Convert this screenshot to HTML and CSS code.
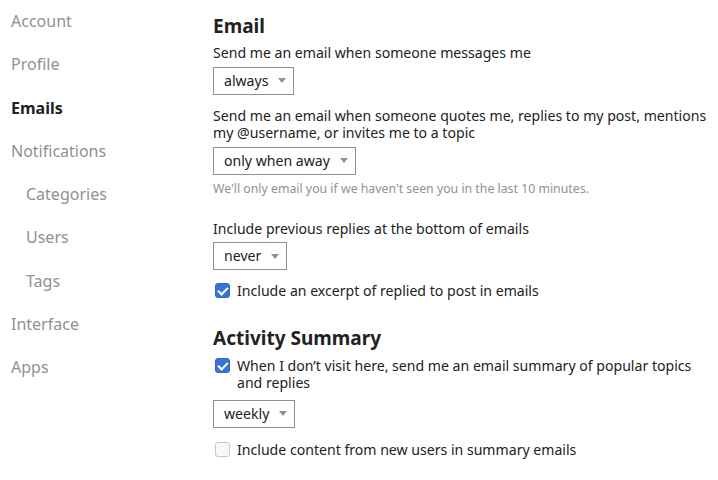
FILE: index.html
```html
<!DOCTYPE html>
<html lang="en">
<head>
    <meta charset="UTF-8">
    <title>Preferences - Emails</title>
    <link rel="stylesheet" href="styles.css">
</head>
<body>
    <div class="page">
        <!-- Sidebar -->
        <nav class="side-nav">
            <ul>
                <li><a href="#">Account</a></li>
                <li><a href="#">Profile</a></li>
                <li class="active"><a href="#">Emails</a></li>
                <li><a href="#">Notifications</a></li>
                <li class="sub"><a href="#">Categories</a></li>
                <li class="sub"><a href="#">Users</a></li>
                <li class="sub"><a href="#">Tags</a></li>
                <li><a href="#">Interface</a></li>
                <li><a href="#">Apps</a></li>
            </ul>
        </nav>

        <!-- Main Content -->
        <main class="prefs">
            <section class="pref-section">
                <h2>Email</h2>

                <div class="control">
                    <label>Send me an email when someone messages me</label>
                    <div class="select">always</div>
                </div>

                <div class="control">
                    <label>Send me an email when someone quotes me, replies to my post, mentions my @username, or invites me to a topic</label>
                    <div class="select">only when away</div>
                    <p class="hint">We'll only email you if we haven't seen you in the last 10 minutes.</p>
                </div>

                <div class="control">
                    <label>Include previous replies at the bottom of emails</label>
                    <div class="select">never</div>
                </div>

                <label class="check"><span class="box checked"></span><span>Include an excerpt of replied to post in emails</span></label>
            </section>

            <section class="pref-section">
                <h2>Activity Summary</h2>

                <label class="check"><span class="box checked"></span><span>When I don’t visit here, send me an email summary of popular topics and replies</span></label>
                <div class="control digest">
                    <div class="select">weekly</div>
                </div>

                <label class="check"><span class="box"></span><span>Include content from new users in summary emails</span></label>
            </section>
        </main>
    </div>
</body>
</html>
```

FILE: styles.css
```css
/* General Styles */
body {
    font-family: 'Noto Sans', sans-serif;
    margin: 0;
    background-color: #fff;
    color: #222;
}

.page {
    display: flex;
}

/* Sidebar */
.side-nav {
    width: 213px;
    flex-shrink: 0;
}

.side-nav ul {
    list-style: none;
    margin: 0;
    padding: 8px 0 0 11px;
}

.side-nav li {
    height: 43.3px;
    font-size: 16px;
    line-height: 26px;
}

.side-nav li a {
    text-decoration: none;
    color: #919191;
}

.side-nav li.sub {
    padding-left: 15px;
}

.side-nav li.active a {
    color: #222;
    font-weight: bold;
}

/* Preferences */
.prefs {
    flex: 1;
    padding-right: 8px;
    font-size: 14.1px;
}

.pref-section h2 {
    font-size: 19px;
    margin: 13px 0 5px;
    line-height: 26px;
}

.pref-section + .pref-section h2 {
    margin: 25px 0 6px;
}

.control {
    margin-bottom: 12px;
}

.control.digest {
    margin: 8px 0 13px;
}

.control label {
    display: block;
    line-height: 17.5px;
    margin-bottom: 5px;
}

.select {
    display: inline-flex;
    align-items: center;
    height: 26px;
    padding: 0 7px 0 10px;
    border: 1px solid #919191;
    line-height: 26px;
}

.select::after {
    content: '';
    margin-left: 10px;
    border-left: 4.5px solid transparent;
    border-right: 4.5px solid transparent;
    border-top: 5px solid #919191;
}

.hint {
    margin: 5px 0 23px;
    font-size: 12.3px;
    color: #919191;
}

.check {
    display: flex;
    align-items: flex-start;
    gap: 7px;
    line-height: 17.5px;
    margin-bottom: 7px;
    padding-left: 2px;
}

.box {
    width: 13px;
    height: 13px;
    margin-top: 1px;
    flex-shrink: 0;
    border: 1px solid #c8c8c8;
    border-radius: 3px;
    background-color: #f8f8f8;
}

.box.checked {
    background-color: #3874d8;
    border-color: #2f66c4;
    position: relative;
}

.box.checked::after {
    content: '';
    position: absolute;
    left: 4px;
    top: 1px;
    width: 4px;
    height: 8px;
    border: solid #fff;
    border-width: 0 2px 2px 0;
    transform: rotate(45deg);
}
```
